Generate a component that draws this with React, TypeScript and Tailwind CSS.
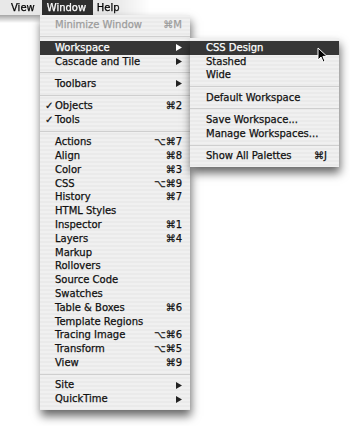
import clsx from 'clsx';

type Item =
  | { kind: 'sep' }
  | {
      kind: 'item';
      label: string;
      keys?: string;
      check?: boolean;
      sub?: boolean;
      active?: boolean;
      disabled?: boolean;
    };

const sep: Item = { kind: 'sep' };
const it = (label: string, opts: Partial<Omit<Extract<Item, { kind: 'item' }>, 'kind' | 'label'>> = {}): Item => ({
  kind: 'item',
  label,
  ...opts,
});

const windowMenu: Item[] = [
  it('Minimize Window', { keys: '⌘M', disabled: true }),
  sep,
  it('Workspace', { sub: true, active: true }),
  it('Cascade and Tile', { sub: true }),
  sep,
  it('Toolbars', { sub: true }),
  sep,
  it('Objects', { check: true, keys: '⌘2' }),
  it('Tools', { check: true }),
  sep,
  it('Actions', { keys: '⌥⌘7' }),
  it('Align', { keys: '⌘8' }),
  it('Color', { keys: '⌘3' }),
  it('CSS', { keys: '⌥⌘9' }),
  it('History', { keys: '⌘7' }),
  it('HTML Styles'),
  it('Inspector', { keys: '⌘1' }),
  it('Layers', { keys: '⌘4' }),
  it('Markup'),
  it('Rollovers'),
  it('Source Code'),
  it('Swatches'),
  it('Table & Boxes', { keys: '⌘6' }),
  it('Template Regions'),
  it('Tracing Image', { keys: '⌥⌘6' }),
  it('Transform', { keys: '⌥⌘5' }),
  it('View', { keys: '⌘9' }),
  sep,
  it('Site', { sub: true }),
  it('QuickTime', { sub: true }),
];

const workspaceMenu: Item[] = [
  it('CSS Design', { active: true }),
  it('Stashed'),
  it('Wide'),
  sep,
  it('Default Workspace'),
  sep,
  it('Save Workspace...'),
  it('Manage Workspaces...'),
  sep,
  it('Show All Palettes', { keys: '⌘J' }),
];

function Arrow() {
  return (
    <svg width="6" height="7" viewBox="0 0 6 7" className="block">
      <polygon points="0,0 6,3.5 0,7" fill="currentColor" />
    </svg>
  );
}

function MenuList({ items, lead, pr }: { items: Item[]; lead: string; pr: string }) {
  return (
    <>
      {items.map((item, i) =>
        item.kind === 'sep' ? (
          <div key={i} className="flex h-[8.5px] items-center">
            <div className="h-px w-full bg-[#cfcfcf]" />
          </div>
        ) : (
          <div
            key={i}
            className={clsx(
              'flex h-[13.8px] items-center',
              pr,
              item.active ? 'bg-[#363636] text-white' : item.disabled ? 'text-[#9c9c9c]' : 'text-[#111]',
            )}
          >
            <div className={clsx('shrink-0', lead)}>{item.check ? '✓' : ''}</div>
            <div className="flex-1 whitespace-nowrap">{item.label}</div>
            {item.keys && <div className="whitespace-nowrap">{item.keys}</div>}
            {item.sub && (
              <div className={item.active ? 'text-white' : 'text-[#222]'}>
                <Arrow />
              </div>
            )}
          </div>
        ),
      )}
    </>
  );
}

export default function App() {
  return (
    <div className="relative h-[426px] w-[350px] overflow-hidden bg-white font-['DejaVu_Sans',sans-serif] text-[10px] leading-none [-webkit-text-stroke:0.25px_currentColor]">
      <div className="[mask-image:linear-gradient(to_right,#000_115px,transparent_150px)]">
        <div className="flex h-[15px] items-center bg-[#e8e8e8] text-black">
          <span className="pl-[11px]">View</span>
          <span className="ml-[7px] flex h-full w-[51px] items-center bg-[#2f2f2f] pl-[5px] text-white">Window</span>
          <span className="ml-[4px]">Help</span>
        </div>
        <div className="h-[8px] bg-gradient-to-b from-black/35 to-transparent" />
      </div>

      <div className="absolute left-[40px] top-[15px] w-[150px] bg-[repeating-linear-gradient(#f0f0f0_0px,#f0f0f0_2px,#eaeaea_2px,#eaeaea_4px)] pb-[4px] pt-[3.6px] shadow-[1px_6px_9px_rgba(0,0,0,0.6)]">
        <MenuList items={windowMenu} lead="w-[15px] pl-[5px]" pr="pr-[8px]" />
      </div>

      <div className="absolute left-[190px] top-[38px] w-[149px] bg-[repeating-linear-gradient(#f0f0f0_0px,#f0f0f0_2px,#eaeaea_2px,#eaeaea_4px)] pb-[3.5px] pt-[3px] shadow-[1px_6px_9px_rgba(0,0,0,0.6)]">
        <MenuList items={workspaceMenu} lead="w-[16px]" pr="pr-[12px]" />
      </div>

      <svg className="absolute left-[317px] top-[47px]" width="11" height="17" viewBox="0 0 11 17">
        <path d="M1 1 L1 13 L4 10 L6.2 15 L8 14.2 L5.9 9.4 L10 9.4 Z" fill="#000" stroke="#fff" strokeWidth="1" strokeLinejoin="round" />
      </svg>
    </div>
  );
}
